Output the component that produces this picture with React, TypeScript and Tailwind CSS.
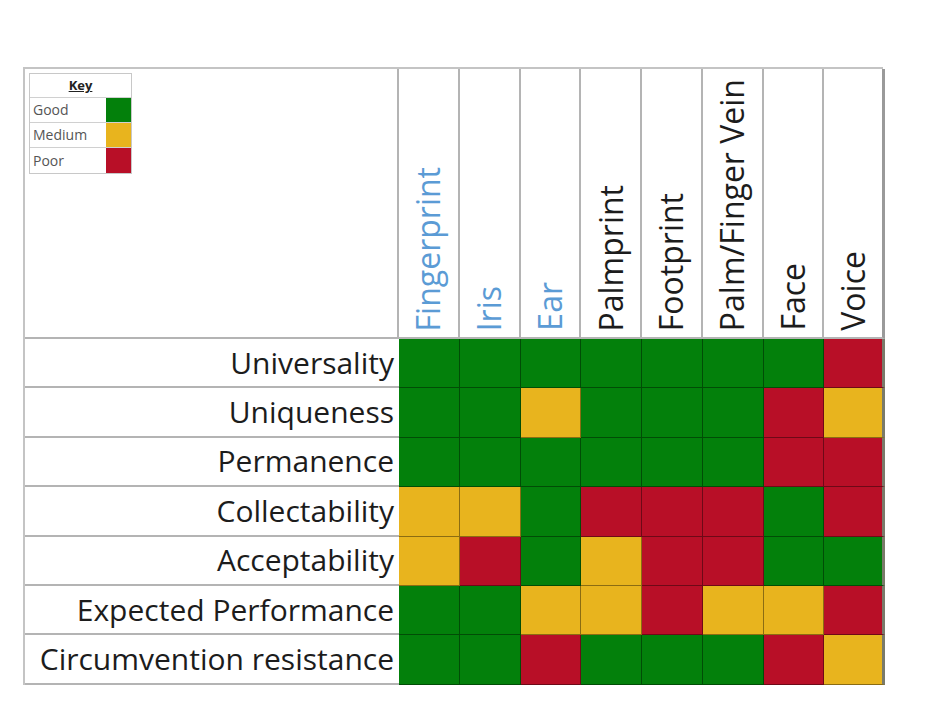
import React from 'react';

type Level = 'G' | 'M' | 'P';

const columns = [
  { name: 'Fingerprint', blue: true },
  { name: 'Iris', blue: true },
  { name: 'Ear', blue: true },
  { name: 'Palmprint', blue: false },
  { name: 'Footprint', blue: false },
  { name: 'Palm/Finger Vein', blue: false },
  { name: 'Face', blue: false },
  { name: 'Voice', blue: false },
];

const rows: { label: string; values: Level[] }[] = [
  { label: 'Universality', values: ['G', 'G', 'G', 'G', 'G', 'G', 'G', 'P'] },
  { label: 'Uniqueness', values: ['G', 'G', 'M', 'G', 'G', 'G', 'P', 'M'] },
  { label: 'Permanence', values: ['G', 'G', 'G', 'G', 'G', 'G', 'P', 'P'] },
  { label: 'Collectability', values: ['M', 'M', 'G', 'P', 'P', 'P', 'G', 'P'] },
  { label: 'Acceptability', values: ['M', 'P', 'G', 'M', 'P', 'P', 'G', 'G'] },
  { label: 'Expected Performance', values: ['G', 'G', 'M', 'M', 'P', 'M', 'M', 'P'] },
  { label: 'Circumvention resistance', values: ['G', 'G', 'P', 'G', 'G', 'G', 'P', 'M'] },
];

const fill: Record<Level, string> = {
  G: 'bg-[#03800b]',
  M: 'bg-[#e8b41e]',
  P: 'bg-[#b80f27]',
};

function KeyBox() {
  return (
    <div className="w-[103px] border border-[#c8c8c8] text-[14px] leading-none text-[#555] font-['Open_Sans',sans-serif]">
      <div className="h-[24px] flex items-center justify-center border-b border-[#d0d0d0]">
        <span className="font-bold text-[#222] underline text-[13px]">Key</span>
      </div>
      {[
        { t: 'Good', c: 'bg-[#03800b]' },
        { t: 'Medium', c: 'bg-[#e8b41e]' },
        { t: 'Poor', c: 'bg-[#b80f27]' },
      ].map((k, i) => (
        <div key={k.t} className={`flex h-[25px] ${i < 2 ? 'border-b border-[#d0d0d0]' : ''}`}>
          <div className="flex-1 flex items-center pl-[3px]">{k.t}</div>
          <div className={`w-[25px] ${k.c}`} />
        </div>
      ))}
    </div>
  );
}

export default function App() {
  return (
    <div className="w-[947px] h-[708px] bg-white font-['Open_Sans',sans-serif] overflow-hidden">
      <div className="pt-[67px] pl-[23px]">
        <div className="grid grid-cols-[374px_repeat(8,60.75px)] grid-rows-[270px_repeat(7,49.4px)] w-[860px] border-t-2 border-l-2 border-[#c4c4c4]">
          {/* header corner with key */}
          <div className="border-r-2 border-b-2 border-[#b4b4b4] pl-[4px] pt-[4px]">
            <KeyBox />
          </div>
          {columns.map((c, i) => (
            <div
              key={c.name}
              className={`flex items-end justify-center pb-[6px] border-b-2 ${
                i === columns.length - 1 ? 'border-r-[3px] border-[#9a9a9a]' : 'border-r-2'
              } border-b-[#b4b4b4] ${i === columns.length - 1 ? '' : 'border-r-[#b4b4b4]'}`}
            >
              <span
                className={`[writing-mode:vertical-rl] rotate-180 text-[32px] leading-none whitespace-nowrap ${
                  c.blue ? 'text-[#5b9bd5]' : 'text-[#1c1c1c]'
                }`}
              >
                {c.name}
              </span>
            </div>
          ))}
          {rows.map((r) => (
            <React.Fragment key={r.label}>
              <div className="flex items-center justify-end pr-[5px] border-b-2 border-[#b4b4b4] text-[30px] leading-none text-[#1c1c1c] whitespace-nowrap">
                {r.label}
              </div>
              {r.values.map((v, j) => (
                <div
                  key={j}
                  className={`${fill[v]} border-b border-r border-black/40 ${
                    j === 7 ? 'border-r-[3px] border-r-[#7a7a6a]' : ''
                  }`}
                />
              ))}
            </React.Fragment>
          ))}
        </div>
      </div>
    </div>
  );
}
